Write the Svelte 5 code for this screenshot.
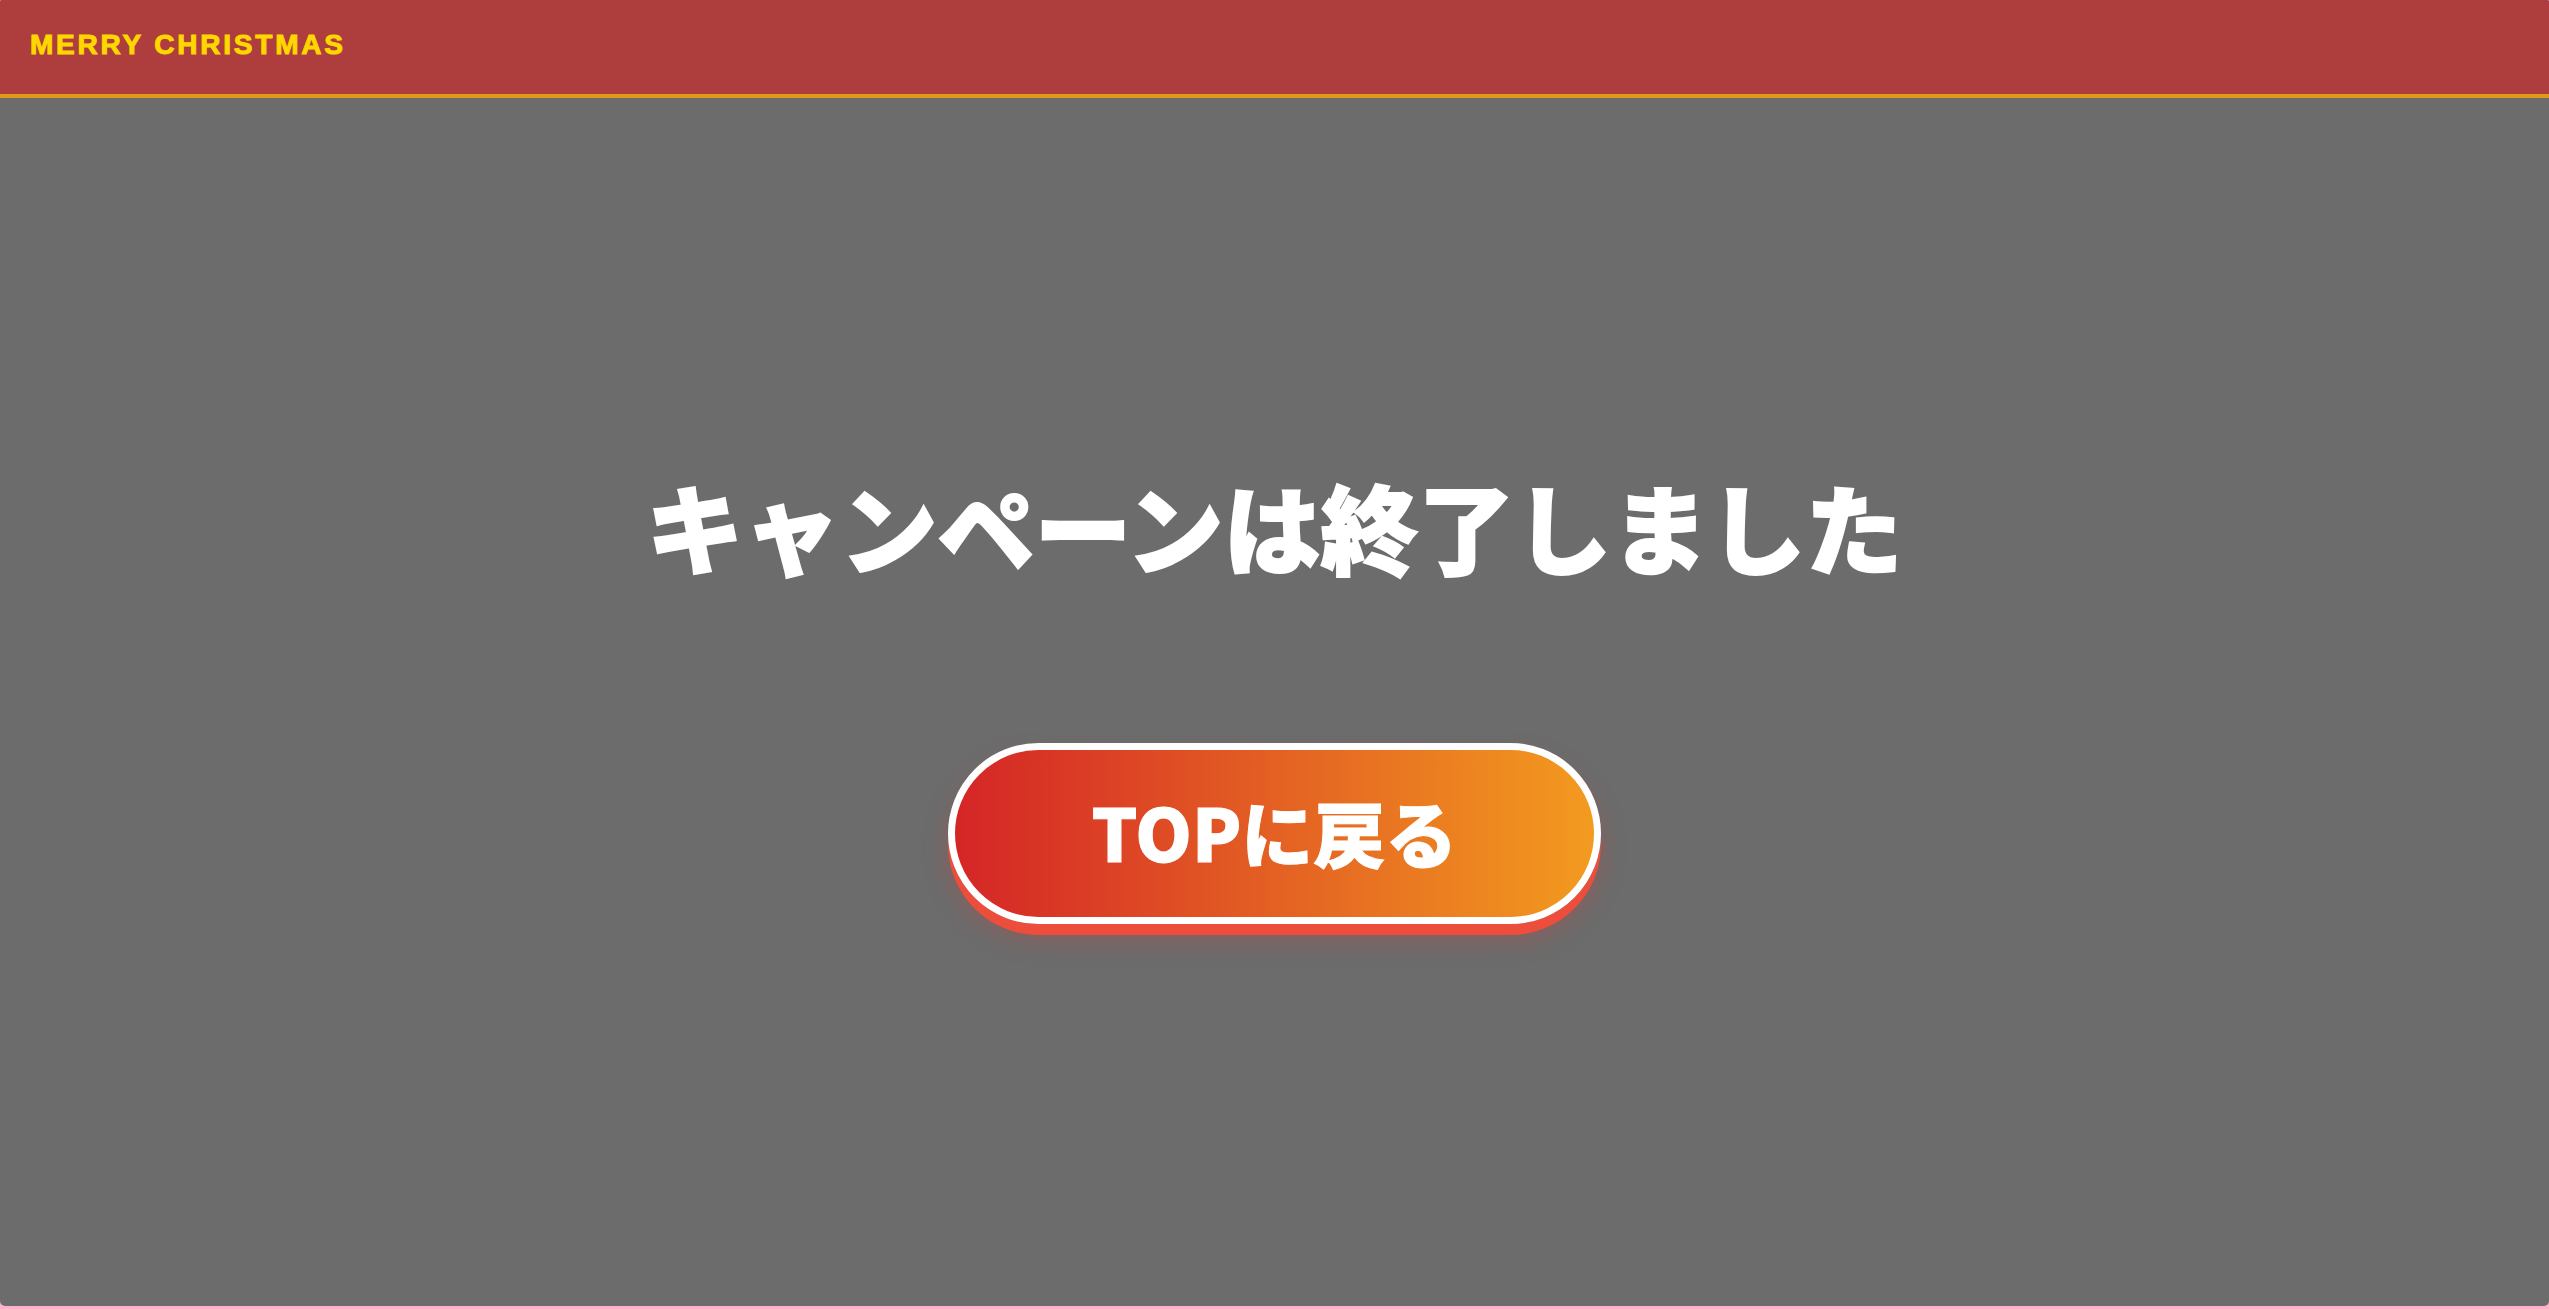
<script lang="ts">
  export let brand = 'MERRY CHRISTMAS';
  export let message = 'キャンペーンは終了しました';
  export let topUrl = '#top';
</script>

<div class="page">
  <div class="screen">
    <header>
      <span class="brand">{brand}</span>
    </header>
    <main>
      <h1>{message}</h1>
      <a class="button" href={topUrl}>TOPに戻る</a>
    </main>
  </div>
</div>

<style>
  :global(body) {
    margin: 0;
    background: #ffb3cb;
  }

  .page {
    box-sizing: border-box;
    min-height: 100vh;
    padding-bottom: 3px;
    display: flex;
  }

  .screen {
    flex: 1;
    display: flex;
    flex-direction: column;
    overflow: hidden;
    border-radius: 2px 2px 5px 5px;
    background: #6c6c6c;
  }

  header {
    display: flex;
    align-items: center;
    padding: 29px 30px 33px;
    background: #ae3e3d;
    border-bottom: 4px solid #e09a1a;
  }

  .brand {
    color: #ffd700;
    font: bold 28px/32px 'Liberation Sans', Arial, sans-serif;
    letter-spacing: 0.1em;
    -webkit-text-stroke: 1px #ffd700;
  }

  main {
    flex: 1;
    display: flex;
    flex-direction: column;
    align-items: center;
    justify-content: center;
    gap: 146px;
    padding-bottom: 28px;
    color: #fff;
    font-family: 'Noto Sans CJK JP', sans-serif;
    font-weight: 900;
  }

  h1 {
    margin: 0;
    font-size: 97px;
    font-weight: 900;
    line-height: 144px;
    text-align: center;
    -webkit-text-stroke: 2px #fff;
  }

  .button {
    padding: 30px 137px 36px;
    border: 7px solid #fff;
    border-radius: 999px;
    background: linear-gradient(90deg, #d42427, #f39c1f) border-box;
    box-shadow: 0 11px 0 #ed4e3b, 0 15px 24px rgba(190, 70, 70, 0.4);
    color: #fff;
    font-size: 72px;
    line-height: 101px;
    text-decoration: none;
    -webkit-text-stroke: 1px #fff;
  }
</style>
